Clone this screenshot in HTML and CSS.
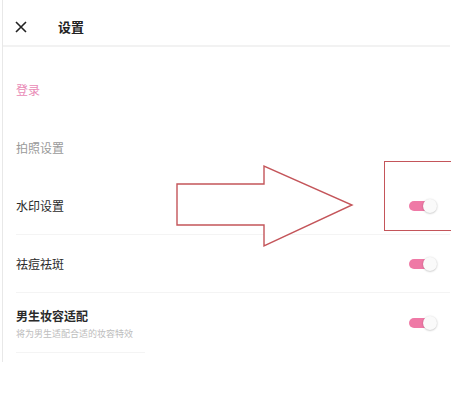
FILE: index.html
```html
<!DOCTYPE html>
<html lang="zh">
<head>
<meta charset="utf-8">
<link rel="stylesheet" href="styles.css">
</head>
<body>
<div class="page">
  <div class="frame">
    <header class="header">
      <svg class="close" width="12" height="12" viewBox="0 0 12 12"><path d="M1 1L11 11M11 1L1 11" stroke="#222" stroke-width="1.6" fill="none"/></svg>
      <span class="title">设置</span>
    </header>
    <div class="list">
      <div class="row"><span class="label pink">登录</span></div>
      <div class="row"><span class="label gray">拍照设置</span></div>
      <div class="row line"><span class="label">水印设置</span><span class="toggle"><span class="knob"></span></span></div>
      <div class="row line"><span class="label">祛痘祛斑</span><span class="toggle"><span class="knob"></span></span></div>
      <div class="row line short tall">
        <div class="stack"><span class="label bold">男生妆容适配</span><span class="sub">将为男生适配合适的妆容特效</span></div>
        <span class="toggle"><span class="knob"></span></span>
      </div>
    </div>
  </div>
  <svg class="arrow" width="456" height="412" viewBox="0 0 456 412"><path d="M177 184H264V166L352 205L264 246V225H177Z" fill="#fff" stroke="#c4555a" stroke-width="1.4" stroke-linejoin="miter"/></svg>
  <div class="redbox"></div>
</div>
</body>
</html>
```
FILE: styles.css
```css
html, body {
  margin: 0;
  padding: 0;
  background: #fff;
}
body {
  font-family: "Noto Sans CJK SC", "Noto Sans", sans-serif;
  color: #333;
}
.page {
  position: relative;
  width: 456px;
  height: 412px;
  overflow: hidden;
}
.frame {
  margin-left: 2px;
  width: 447px;
  height: 362px;
  border-left: 1px solid #e8e8e8;
}
.header {
  height: 47px;
  border-bottom: 2px solid #f2f2f2;
  display: flex;
  align-items: center;
  padding-left: 12px;
  padding-top: 8px;
  box-sizing: border-box;
}
.title {
  margin-left: 31px;
  font-size: 13px;
  font-weight: 700;
  color: #222;
}
.list {
  padding-top: 14px;
}
.row {
  height: 58px;
  display: flex;
  align-items: center;
  justify-content: space-between;
  padding-left: 13px;
  padding-right: 13px;
  box-sizing: border-box;
  position: relative;
}
.row.line::after {
  content: "";
  position: absolute;
  left: 13px;
  right: 0;
  bottom: 0;
  height: 1px;
  background: #f4f4f4;
}
.row.short::after {
  right: 305px;
}
.row.tall {
  height: 60px;
}
.label {
  font-size: 12px;
  line-height: 16px;
  color: #2a2a2a;
}
.label.pink {
  color: #e98ab6;
}
.label.gray {
  color: #9a9a9a;
}
.label.bold {
  font-weight: 700;
  color: #2a2a2a;
}
.stack {
  display: flex;
  flex-direction: column;
  margin-top: 1px;
}
.sub {
  font-size: 9px;
  line-height: 12px;
  color: #bdbdbd;
  margin-top: 4px;
}
.toggle {
  position: relative;
  width: 28px;
  height: 14px;
  display: flex;
  align-items: center;
}
.toggle::before {
  content: "";
  width: 20px;
  height: 10px;
  border-radius: 5px;
  background: #ef79a6;
}
.knob {
  position: absolute;
  right: 0;
  top: 0;
  width: 14px;
  height: 14px;
  border-radius: 50%;
  background: #fafafa;
  box-shadow: 0 0.5px 2px rgba(0,0,0,0.28);
}
.arrow {
  position: absolute;
  left: 0;
  top: 0;
  pointer-events: none;
}
.redbox {
  position: absolute;
  left: 384px;
  top: 161px;
  width: 66px;
  height: 68px;
  border: 1.5px solid #c4555a;
  border-right: none;
}
```
